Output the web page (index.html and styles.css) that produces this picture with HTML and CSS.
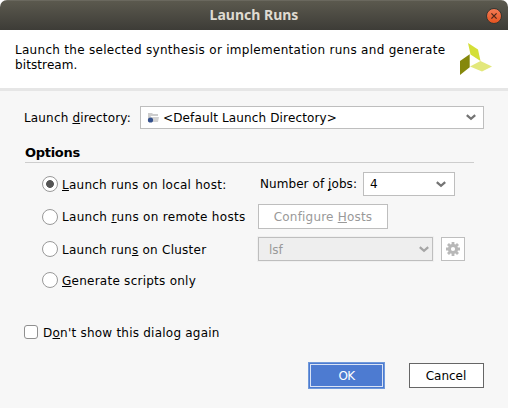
FILE: index.html
```html
<!DOCTYPE html>
<html lang="en">
<head>
<meta charset="utf-8">
<title>Launch Runs</title>
<link rel="stylesheet" href="styles.css">
</head>
<body>
<div class="dialog">
  <header class="titlebar">
    <h1>Launch Runs</h1>
    <button class="close" aria-label="Close"><svg width="18" height="18" viewBox="0 0 18 18"><path d="M6.400 6.400l5.200 5.200M11.600 6.400l-5.200 5.200" stroke="#51281a" stroke-width="1.300"/></svg></button>
  </header>
  <section class="intro">
    <p>Launch the selected synthesis or implementation runs and generate<br><span class="second">bitstream.</span></p>
    <svg class="logo" width="32" height="32" viewBox="0 0 32 32"><path d="M8 0l10 6.500 2.500 11.500-10-6.500z" fill="#d4df38"/><path d="M0 18l9.700-6.800v13L0 32z" fill="#85880b"/><path d="M10 23.500L20.500 18 32 23.500 22 28.500z" fill="#e3e87c"/></svg>
  </section>
  <main>
    <div class="directory">
      <label><span class="t-dir">Launch <u>d</u>irectory:</span></label>
      <div class="combo dir-combo">
        <svg class="folder" width="13" height="12" viewBox="0 0 13 12"><path d="M1 1h4l1 1h5v2H4L2 10H1z" fill="#cdcdcd"/><path d="M4 5h8l-1 5H2z" fill="#d3d3d3"/><circle cx="3.500" cy="8" r="2.600" fill="#34508c"/></svg>
        <span class="t-default">&lt;Default Launch Directory&gt;</span>
        <svg class="arrow" width="10" height="7" viewBox="0 0 10 7"><path d="M.8 1.200L5 4.800 9.200 1.200" fill="none" stroke="#747474" stroke-width="2.300"/></svg>
      </div>
    </div>
    <h2>Options</h2>
    <div class="options">
      <div class="row local">
        <label class="choice"><i class="radio on"></i><span class="t-local"><u>L</u>aunch runs on local host:</span></label>
        <label class="jobs"><span>Number of <u>j</u>obs:</span></label>
        <div class="combo jobs-combo"><span>4</span><svg class="arrow" width="10" height="7" viewBox="0 0 10 7"><path d="M.8 1.200L5 4.800 9.200 1.200" fill="none" stroke="#747474" stroke-width="2.300"/></svg></div>
      </div>
      <div class="row remote">
        <label class="choice"><i class="radio"></i><span class="t-remote">Launch <u>r</u>uns on remote hosts</span></label>
        <button class="configure" disabled><span>Configure <u>H</u>osts</span></button>
      </div>
      <div class="row cluster">
        <label class="choice"><i class="radio"></i><span class="t-cluster">Launch run<u>s</u> on Cluster</span></label>
        <div class="combo lsf"><span>lsf</span><svg class="arrow" width="10" height="7" viewBox="0 0 10 7"><path d="M.8 1.200L5 4.800 9.200 1.200" fill="none" stroke="#a5a5a5" stroke-width="2.300"/></svg></div>
        <button class="gear" disabled aria-label="Settings"><svg width="14" height="14" viewBox="0 0 14 14"><g stroke="#b8b8b8"><path d="M7 0v3M7 11v3M0 7h3M11 7h3M2 2l2 2M10 10l2 2M12 2l-2 2M2 12l2-2" stroke-width="2.800"/><circle cx="7" cy="7" r="3.600" fill="#fff" stroke-width="3"/></g></svg></button>
      </div>
      <div class="row scripts">
        <label class="choice"><i class="radio"></i><span class="t-scripts"><u>G</u>enerate scripts only</span></label>
      </div>
    </div>
    <label class="again"><i class="check"></i><span>D<u>o</u>n't show this dialog again</span></label>
    <footer>
      <button class="ok"><span>OK</span></button>
      <button class="cancel"><span>Cancel</span></button>
    </footer>
  </main>
</div>
</body>
</html>
```
FILE: styles.css
```css
* { box-sizing: border-box; }
body { margin: 0; background: #fff; }
.dialog {
  width: 508px; height: 408px; overflow: hidden;
  font: 12px/14px "DejaVu Sans", sans-serif; color: #000;
  background: #f7f7f7; border-radius: 7px 7px 0 0;
}
h1, h2, p { margin: 0; }
svg { display: block; flex: none; }
button { padding: 0; font: inherit; color: inherit; display: flex; align-items: center; justify-content: center; }
label, span { white-space: nowrap; }
u { text-decoration: underline; text-decoration-thickness: 1px; text-underline-offset: 1px; text-decoration-skip-ink: none; }

.titlebar {
  height: 30px; display: grid; grid-template-columns: 26px 1fr 26px; align-items: center;
  background: linear-gradient(#5b594e, #3d3c37); border-top: 1px solid #6a685e;
}
.titlebar h1 { grid-column: 2; padding-bottom: 2px; text-align: center; font: bold 14px/20px "Noto Sans", sans-serif; color: #dfdbd2; }
.close { width: 16px; height: 16px; margin-left: 4px; border: 1px solid #393731; border-radius: 50%; background: linear-gradient(#f37b55, #e65420); }

.intro { height: 61px; padding: 13px 16px 0 15px; display: flex; justify-content: space-between; background: #fff; border-bottom: 3px solid #e6e6e6; }
.intro p { line-height: 15px; letter-spacing: .29px; }
.intro .second { letter-spacing: .1px; }

main { padding: 15px 24px 0; }
.directory { display: flex; height: 23px; align-items: center; }
.directory label { width: 116px; display: flex; }
.directory span { padding-top: 1px; }
.t-dir { letter-spacing: .16px; }
.t-default { letter-spacing: .14px; }
.combo { display: flex; align-items: center; background: #fff; border: 1px solid #bebebe; }
.arrow { margin-left: auto; }
.dir-combo { width: 344px; height: 23px; padding: 0 7px 0 6px; }
.folder { margin-right: 3px; }
h2 { width: 449px; height: 20px; margin: 14px 0 0 1px; padding-top: 2px; border-bottom: 1px solid #cdcdcd; font: bold 13px/15px "DejaVu Sans", sans-serif; letter-spacing: -.3px; }
.options { padding-top: 9px; }
.row { display: flex; align-items: center; height: 24px; padding-left: 18px; }
.choice { display: flex; align-items: center; gap: 4px; width: 216px; }
.choice span { padding-top: 2px; letter-spacing: .25px; }
.radio { width: 16px; height: 16px; border: 1px solid #999; border-radius: 50%; background: #fff; flex: none; }
.radio.on { background: radial-gradient(circle, #555 0 3.500px, #fff 4.300px); }
.jobs { display: flex; width: 105px; padding-left: 2px; letter-spacing: .07px; }
.jobs-combo { width: 92px; height: 24px; padding: 0 8px 0 6px; }
.remote { height: 25px; margin-top: 8px; }
.remote .t-remote { padding-top: 1px; letter-spacing: .3px; }
.cluster { margin-top: 8px; }
.configure { width: 130px; height: 25px; padding-top: 1px; background: #fff; border: 1px solid #bebebe; color: #999; letter-spacing: .2px; }
.lsf { width: 175px; height: 24px; padding: 0 3px 0 10px; background: #eee; color: #999; outline: 1px solid #f0f0f0; }
.lsf span { padding-top: 2px; }
.gear { width: 24px; height: 24px; margin-left: 8px; background: #fff; border: 1px solid #bebebe; }
.scripts { margin-top: 7px; }
.again { display: flex; align-items: center; height: 16px; margin-top: 32px; gap: 5px; letter-spacing: .23px; }
.again span { padding-top: 2px; }
.check { width: 14px; height: 14px; border: 1px solid #8f8f8f; border-radius: 3px; background: #fff; }
footer { display: flex; justify-content: flex-end; align-items: center; gap: 24px; height: 27px; margin-top: 22px; }
.ok { width: 77px; height: 27px; padding-top: 1px; border: 1px solid #719ada; background: #4d7bd1; color: #fff; outline: 1px solid #d9e3f5; outline-offset: -3px; letter-spacing: -.6px; }
.cancel { width: 75px; height: 25px; padding: 1px 1px 0 0; background: #fff; border: 1px solid #666; }
```
